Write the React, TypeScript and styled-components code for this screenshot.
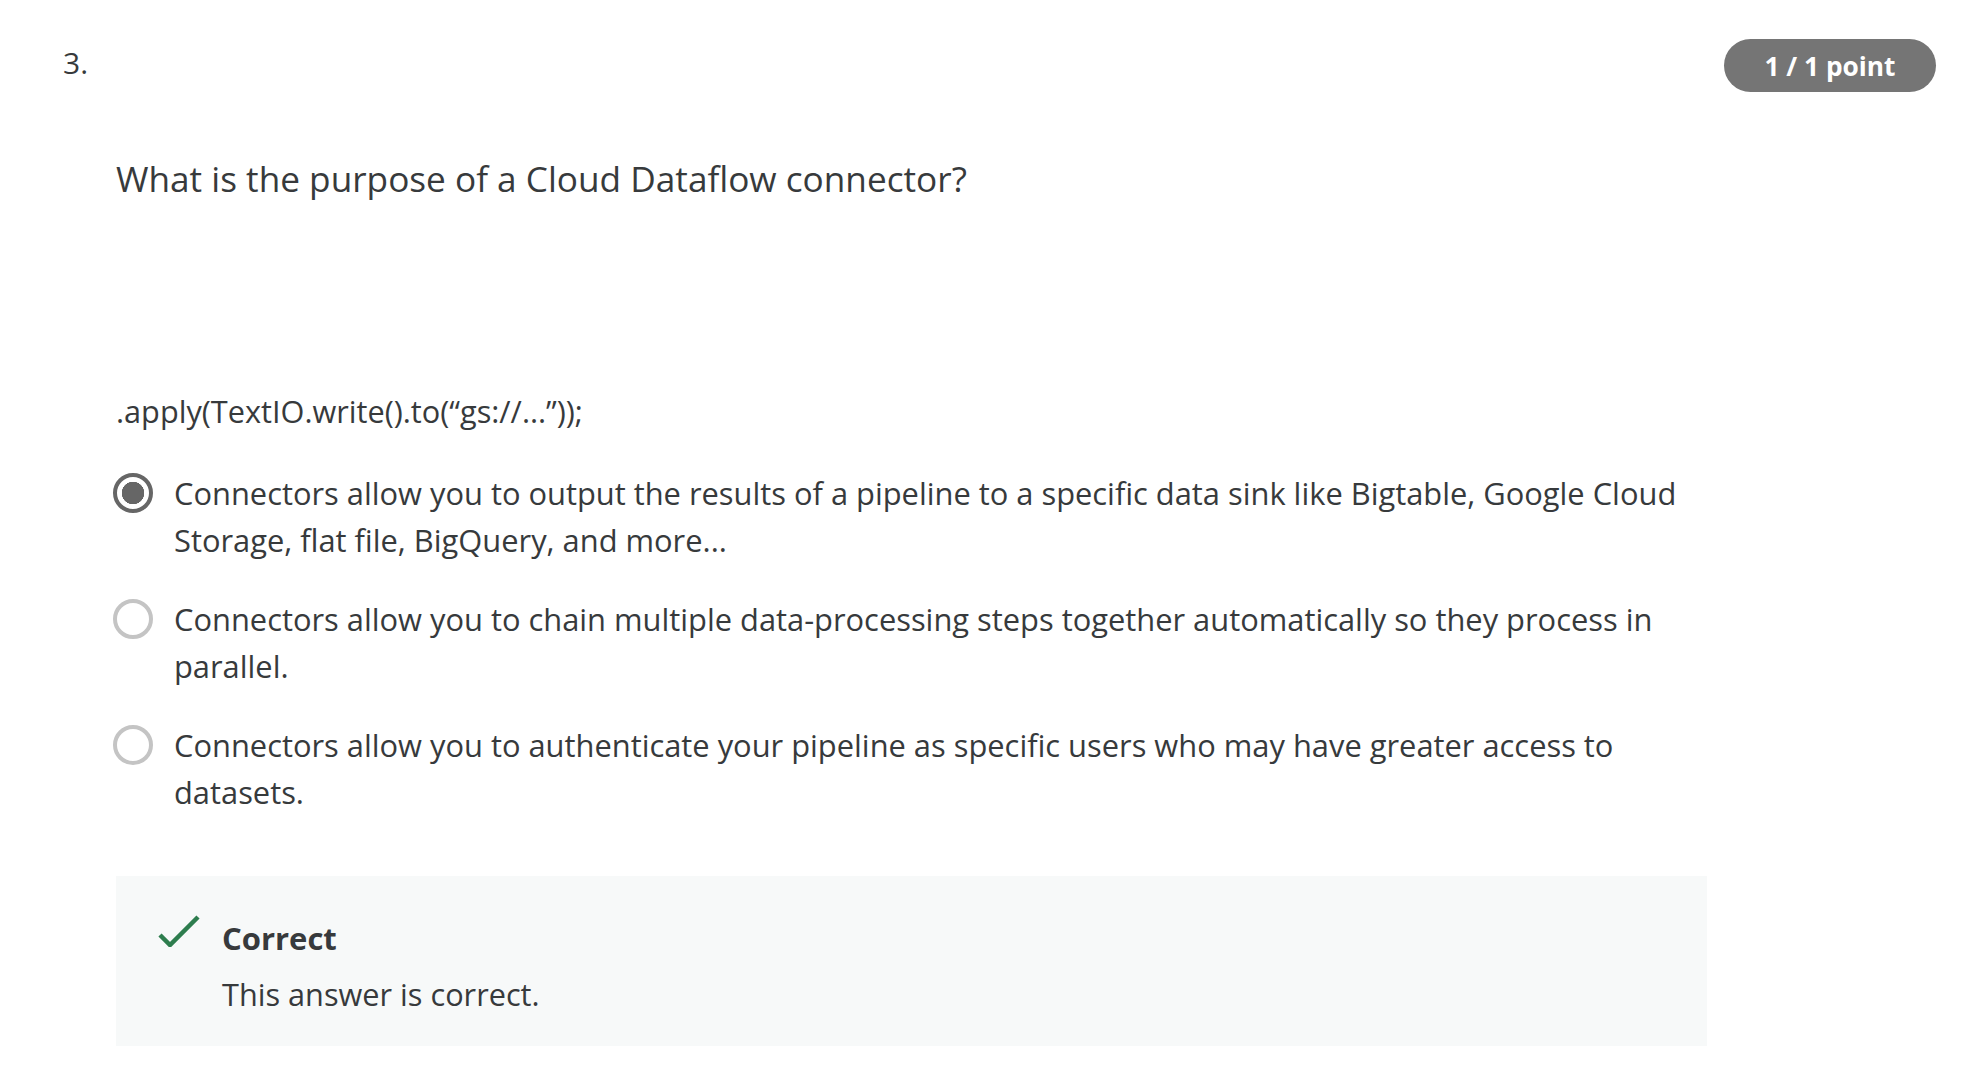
import React from 'react';
import styled, { createGlobalStyle } from 'styled-components';

const GlobalStyle = createGlobalStyle`
  body {
    margin: 0;
    background: #ffffff;
    font-family: "Open Sans", "Noto Sans", sans-serif;
    color: #373a3c;
  }
`;

const options = [
  {
    text: 'Connectors allow you to output the results of a pipeline to a specific data sink like Bigtable, Google Cloud Storage, flat file, BigQuery, and more...',
    checked: true,
  },
  {
    text: 'Connectors allow you to chain multiple data-processing steps together automatically so they process in parallel.',
    checked: false,
  },
  {
    text: 'Connectors allow you to authenticate your pipeline as specific users who may have greater access to datasets.',
    checked: false,
  },
];

const App = () => {
  return (
    <>
      <GlobalStyle />
      <Page>
        <Header>
          <Number>3.</Number>
          <Badge>1 / 1 point</Badge>
        </Header>
        <Body>
          <Question>What is the purpose of a Cloud Dataflow connector?</Question>
          <Code>.apply(TextIO.write().to(“gs://...”));</Code>
          <OptionList>
            {options.map((o) => (
              <Option key={o.text}>
                <Radio checked={o.checked} />
                <OptionText>{o.text}</OptionText>
              </Option>
            ))}
          </OptionList>
          <Feedback>
            <CheckIcon viewBox="0 0 42 32">
              <path d="M2 20 L12 30 L40 2" fill="none" stroke="#2d7d4e" strokeWidth="4.5" />
            </CheckIcon>
            <FeedbackText>
              <FeedbackTitle>Correct</FeedbackTitle>
              <FeedbackBody>This answer is correct.</FeedbackBody>
            </FeedbackText>
          </Feedback>
        </Body>
      </Page>
    </>
  );
};

export default App;

const Page = styled.div`
  padding: 39px 36px 0 63px;
`;

const Header = styled.div`
  display: flex;
  justify-content: space-between;
  align-items: flex-start;
`;

const Number = styled.div`
  font-size: 30px;
  line-height: 48px;
`;

const Badge = styled.div`
  display: flex;
  align-items: center;
  justify-content: center;
  width: 212px;
  height: 53px;
  border-radius: 27px;
  background: #757575;
  color: #ffffff;
  font-size: 26.3px;
  font-weight: 700;
`;

const Body = styled.div`
  margin-left: 53px;
  width: 1591px;
  padding-top: 62px;
`;

const Question = styled.div`
  font-size: 35.2px;
  line-height: 48px;
`;

const Code = styled.div`
  margin-top: 186px;
  font-size: 30.7px;
  line-height: 46px;
`;

const OptionList = styled.div`
  display: flex;
  flex-direction: column;
  gap: 33px;
  margin-top: 36px;
`;

const Option = styled.div`
  display: flex;
  align-items: flex-start;
`;

const Radio = styled.span<{ checked: boolean }>`
  flex: none;
  box-sizing: border-box;
  width: 40px;
  height: 40px;
  margin: 3px 21px 0 -3px;
  border-radius: 50%;
  border: 4px solid ${(p) => (p.checked ? '#666666' : '#c4c4c4')};
  background: ${(p) =>
    p.checked ? 'radial-gradient(circle, #666666 0 11px, transparent 11.5px)' : 'transparent'};
`;

const OptionText = styled.div`
  font-size: 30.85px;
  line-height: 46.5px;
  max-width: 1530px;
`;

const Feedback = styled.div`
  display: flex;
  align-items: flex-start;
  margin-top: 61px;
  padding: 40px 40px 29px 42px;
  background: #f7f9f9;
`;

const CheckIcon = styled.svg`
  flex: none;
  width: 42px;
  height: 32px;
  margin-top: -1px;
  margin-right: 22px;
`;

const FeedbackText = styled.div`
  display: flex;
  flex-direction: column;
`;

const FeedbackTitle = styled.div`
  font-size: 31px;
  font-weight: 700;
  line-height: 44px;
`;

const FeedbackBody = styled.div`
  font-size: 30.7px;
  line-height: 46px;
  margin-top: 11px;
`;
